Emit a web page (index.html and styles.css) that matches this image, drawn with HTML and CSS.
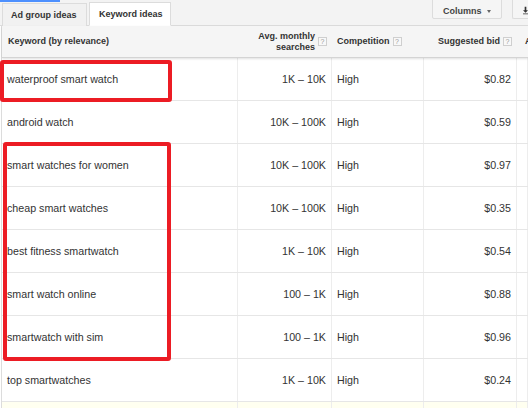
FILE: index.html
```html
<!DOCTYPE html>
<html>
<head>
<meta charset="utf-8">
<link rel="stylesheet" href="styles.css">
</head>
<body>
<div class="page">
  <div class="topline"></div>
  <div class="tabbar">
    <div class="tab">Ad group ideas</div>
    <div class="tab active">Keyword ideas</div>
    <div class="spacer"></div>
    <div class="btn">Columns <span class="caret"></span></div>
    <div class="btn dl">
      <svg width="6" height="10" viewBox="0 0 6 10"><path d="M2 0h2v4h2L3 7 0 4h2z M0 8h6v1H0z" fill="#333"/></svg>
    </div>
  </div>
  <div class="grid">
    <div class="row head">
      <div class="c kw">Keyword (by relevance)</div>
      <div class="c num">Avg. monthly<br>searches <span class="q">?</span></div>
      <div class="c comp">Competition <span class="q">?</span></div>
      <div class="c num">Suggested bid <span class="q">?</span></div>
      <div class="c comp">A</div>
    </div>
    <div class="row"><div class="c kw">waterproof smart watch</div><div class="c num">1K – 10K</div><div class="c comp">High</div><div class="c num">$0.82</div><div class="c"></div></div>
    <div class="row"><div class="c kw">android watch</div><div class="c num">10K – 100K</div><div class="c comp">High</div><div class="c num">$0.59</div><div class="c"></div></div>
    <div class="row"><div class="c kw">smart watches for women</div><div class="c num">10K – 100K</div><div class="c comp">High</div><div class="c num">$0.97</div><div class="c"></div></div>
    <div class="row"><div class="c kw">cheap smart watches</div><div class="c num">10K – 100K</div><div class="c comp">High</div><div class="c num">$0.35</div><div class="c"></div></div>
    <div class="row"><div class="c kw">best fitness smartwatch</div><div class="c num">1K – 10K</div><div class="c comp">High</div><div class="c num">$0.54</div><div class="c"></div></div>
    <div class="row"><div class="c kw">smart watch online</div><div class="c num">100 – 1K</div><div class="c comp">High</div><div class="c num">$0.88</div><div class="c"></div></div>
    <div class="row"><div class="c kw">smartwatch with sim</div><div class="c num">100 – 1K</div><div class="c comp">High</div><div class="c num">$0.96</div><div class="c"></div></div>
    <div class="row"><div class="c kw">top smartwatches</div><div class="c num">1K – 10K</div><div class="c comp">High</div><div class="c num">$0.24</div><div class="c"></div></div>
    <div class="row hl"><div class="c kw"></div><div class="c num"></div><div class="c comp"></div><div class="c num"></div><div class="c"></div></div>
  </div>
  <div class="mark m1"></div>
  <div class="mark m2"></div>
</div>
</body>
</html>
```

FILE: styles.css
```css
html, body {
  margin: 0;
  padding: 0;
  overflow: hidden;
  background: #fff;
}
body {
  font-family: "Liberation Sans", Arial, sans-serif;
  color: #333;
}
.page {
  position: relative;
  width: 528px;
  height: 408px;
  overflow: hidden;
}
.topline {
  position: absolute;
  left: 0;
  top: 0;
  width: 60px;
  height: 2px;
  background: #4d90fe;
}
.tabbar {
  display: flex;
  align-items: flex-end;
  height: 26px;
  box-sizing: border-box;
  padding: 3px 0 0 2px;
  background: #f3f3f3;
  border-bottom: 1px solid #dcdcdc;
}
.tab {
  height: 23px;
  box-sizing: border-box;
  margin-bottom: -1px;
  padding: 0 0 0 8px;
  display: flex;
  align-items: center;
  font-size: 9px;
  font-weight: bold;
  color: #333;
  white-space: nowrap;
  border: 1px solid #dcdcdc;
  border-bottom: none;
  background: #f1f1f1;
  margin-right: 2px;
  width: 85px;
}
.tab.active {
  background: #fff;
  height: 24px;
  width: 82px;
  padding: 0 0 0 9px;
  border-bottom: 1px solid #fff;
}
.spacer { flex: 1; }
.btn {
  align-self: flex-start;
  margin-top: -6px;
  height: 22px;
  box-sizing: border-box;
  padding: 6px 0 0 10px;
  width: 70px;
  flex: none;
  white-space: nowrap;
  font-size: 9px;
  font-weight: bold;
  color: #444;
  background: #f5f5f5;
  border: 1px solid #dcdcdc;
  border-radius: 2px;
  display: flex;
  align-items: center;
}
.caret {
  display: inline-block;
  width: 0;
  height: 0;
  margin-left: 5px;
  border-left: 2.5px solid transparent;
  border-right: 2.5px solid transparent;
  border-top: 3px solid #666;
}
.btn.dl {
  margin-left: 10px;
  width: 16px;
  padding-left: 10px;
  border-right: none;
  border-radius: 2px 0 0 2px;
}
.grid {
  margin-left: 1px;
  border-left: 1px solid #dcdcdc;
}
.row {
  display: grid;
  grid-template-columns: 236px 94px 92px 93px 1fr;
  height: 43px;
  box-sizing: border-box;
  border-bottom: 1px solid #e6e6e6;
  font-size: 10.7px;
}
.row.head {
  height: 32px;
  background: #f5f5f5;
  border-bottom: 1px solid #d4d4d4;
  box-shadow: 0 1px 2px rgba(0,0,0,0.12);
  position: relative;
  font-size: 9px;
  font-weight: bold;
  line-height: 11px;
}
.row.head .c { border-right: none; }
.c {
  box-sizing: border-box;
  border-right: 1px solid #ededed;
  display: flex;
  align-items: center;
  padding: 0 5px 0 5px;
  white-space: nowrap;
  overflow: hidden;
  min-width: 0;
}
.num { justify-content: flex-end; text-align: right; }
.row.head .kw { padding-left: 6px; }
.row.head .c:last-child { padding-left: 8px; }
.q {
  display: inline-block;
  width: 9px;
  height: 9px;
  box-sizing: border-box;
  border: 1px solid #cfcfcf;
  background: #f8f8f8;
  color: #999;
  font-size: 7px;
  line-height: 7px;
  text-align: center;
  font-weight: normal;
  margin-left: 3px;
  vertical-align: -1px;
}
.row.hl { background: #fffff0; }
.mark {
  position: absolute;
  border: 4px solid #ec1c24;
  border-radius: 3px;
  box-sizing: border-box;
}
.m1 { left: 0; top: 60px; width: 172px; height: 42px; }
.m2 { left: 3px; top: 142px; width: 168px; height: 219px; }
```
